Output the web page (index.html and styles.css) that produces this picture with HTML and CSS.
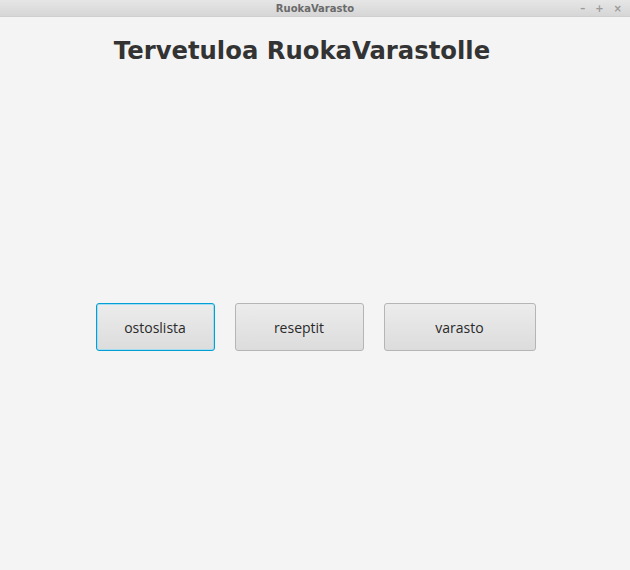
FILE: index.html
```html
<!DOCTYPE html>
<html>
<head>
<meta charset="utf-8">
<link rel="stylesheet" href="styles.css">
</head>
<body>
<div class="window">
  <div class="titlebar">
    <span class="title">RuokaVarasto</span>
    <div class="controls"><span>–</span><span>+</span><span>×</span></div>
  </div>
  <div class="content">
    <h1 class="heading">Tervetuloa RuokaVarastolle</h1>
    <div class="buttons">
      <button class="btn focused b1">ostoslista</button>
      <button class="btn b2">reseptit</button>
      <button class="btn b3">varasto</button>
    </div>
  </div>
</div>
</body>
</html>
```
FILE: styles.css
```css
html, body { margin: 0; padding: 0; }
body { width: 630px; height: 570px; background: #f4f4f4; font-family: "DejaVu Sans", sans-serif; overflow: hidden; }
.window { display: flex; flex-direction: column; height: 570px; }
.titlebar {
  height: 16px; position: relative;
  background: linear-gradient(#e6e6e6, #d6d6d6);
  border-bottom: 1px solid #cfcfcf;
  display: flex; align-items: center; justify-content: center;
}
.title { font-size: 10px; font-weight: bold; color: #6a6a6a; }
.controls { position: absolute; right: 8px; top: 0; height: 16px; display: flex; gap: 10px; align-items: center; font-size: 10px; color: #9a9a9a; font-weight: bold; }
.content { flex: 1; display: flex; flex-direction: column; align-items: center; }
.heading { margin: 20px 26px 0 0; font-size: 24.3px; font-weight: bold; color: #333333; line-height: 28px; }
.buttons { display: flex; gap: 20px; margin-top: 238px; margin-left: 1px; }
.btn {
  height: 48px; border: 1px solid #b5b5b5; border-radius: 3px;
  background: linear-gradient(#ececec, #dcdcdc);
  font-family: "Open Sans", sans-serif; font-size: 14px; color: #2a2a2a;
  padding: 0;
}
.b1 { width: 119px; }
.b2 { width: 129px; }
.b3 { width: 152px; }
.focused { border-color: #039ed3; box-shadow: inset 0 0 0 1px #a6dcef; }
```
